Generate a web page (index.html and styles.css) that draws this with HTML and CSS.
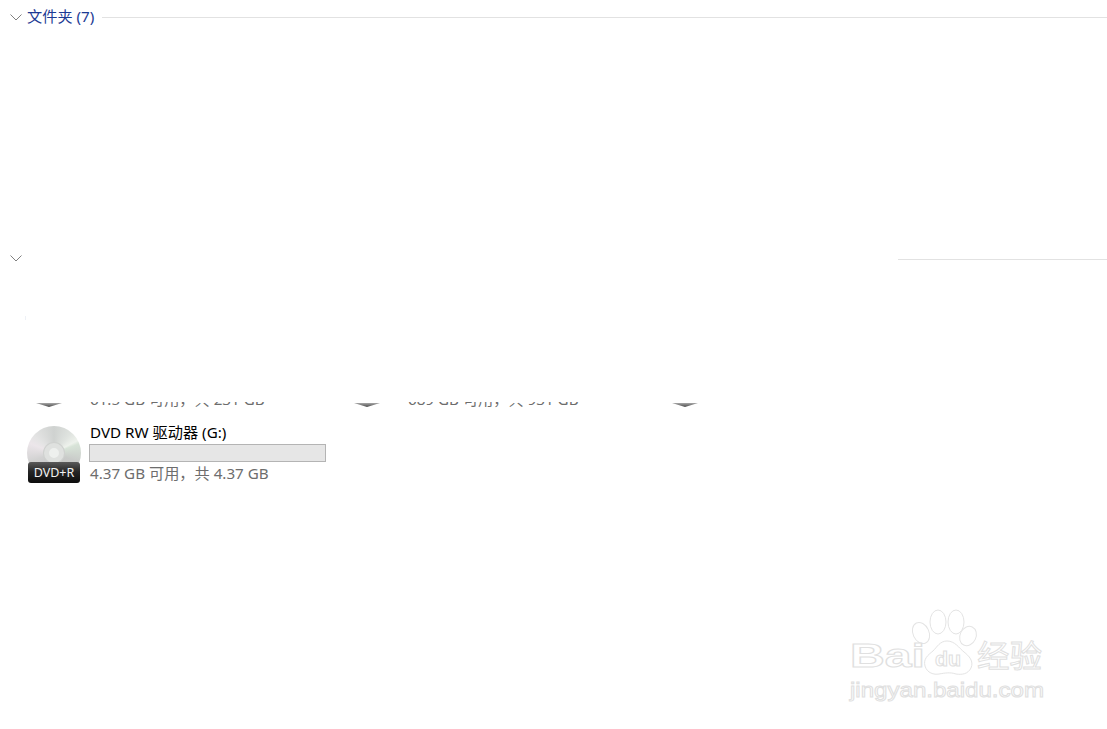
FILE: index.html
```html
<!DOCTYPE html>
<html lang="zh-CN">
<head>
    <meta charset="UTF-8">
    <meta name="viewport" content="width=device-width, initial-scale=1.0">
    <title>此电脑</title>
    <link rel="stylesheet" href="styles.css">
</head>
<body>
    <section class="group group-folders">
        <div class="group-head">
            <svg class="chevron" width="12" height="7" viewBox="0 0 12 7"><path d="M.5.5 6 6 11.500.5" /></svg>
            <span class="group-title">文件夹 (7)</span>
            <span class="group-line"></span>
        </div>
    </section>

    <section class="group group-drives">
        <div class="group-head">
            <svg class="chevron" width="12" height="7" viewBox="0 0 12 7"><path d="M.5.5 6 6 11.500.5" /></svg>
            <span class="group-blank"></span>
            <span class="group-line group-line-low"></span>
        </div>
        <div class="speck"></div>

        <div class="clipped-row">
            <div class="clipped-item">
                <span class="clipped-icon"></span>
                <span class="clipped-text">61.5 GB 可用，共 231 GB</span>
            </div>
            <div class="clipped-item">
                <span class="clipped-icon"></span>
                <span class="clipped-text">689 GB 可用，共 931 GB</span>
            </div>
            <div class="clipped-item">
                <span class="clipped-icon"></span>
            </div>
        </div>

        <div class="drive">
            <div class="disc">
                <div class="disc-hub"></div>
                <div class="disc-label">DVD+R</div>
            </div>
            <div class="drive-info">
                <div class="drive-name">DVD RW 驱动器 (G:)</div>
                <div class="drive-bar"></div>
                <div class="drive-free">4.37 GB 可用，共 4.37 GB</div>
            </div>
        </div>
    </section>

    <svg class="watermark" width="230" height="110" viewBox="0 0 230 110">
        <g class="wm-shape">
            <ellipse cx="91" cy="33" rx="8" ry="11" transform="rotate(-25 91 33)" />
            <ellipse cx="108" cy="22" rx="8" ry="12" />
            <ellipse cx="126" cy="22" rx="8" ry="12" />
            <ellipse cx="138" cy="36" rx="8" ry="10" transform="rotate(25 138 36)" />
            <path d="M117 41c-7 0-10 6-14 10-5 4-10 8-8 15 2 7 9 9 14 8 6-1 11-2 17 0 6 1 12 0 15-6 3-7-2-12-7-16-5-4-9-11-17-11z" />
        </g>
        <text class="wm-text wm-bai" x="20" y="67" textLength="75" lengthAdjust="spacingAndGlyphs">Bai</text>
        <text class="wm-text wm-du" x="105" y="66" textLength="26" lengthAdjust="spacingAndGlyphs">du</text>
        <text class="wm-text wm-cn" x="147" y="67" textLength="65" lengthAdjust="spacingAndGlyphs">经验</text>
        <text class="wm-text wm-url" x="20" y="97" textLength="194" lengthAdjust="spacingAndGlyphs">jingyan.baidu.com</text>
    </svg>
</body>
</html>
```

FILE: styles.css
```css
html, body {
    height: 100%;
}

body {
    margin: 0;
    position: relative;
    overflow: hidden;
    background: #fff;
    font-family: "Noto Sans", "Noto Sans CJK SC", sans-serif;
    font-size: 15.2px;
}

.group-folders {
    height: 241px;
}

.group-head {
    display: flex;
    align-items: center;
    height: 34px;
    padding-left: 10px;
}

.chevron {
    flex: none;
    fill: none;
    stroke: #808080;
    stroke-width: 1;
}

.group-title {
    margin-left: 5px;
    margin-top: -3px;
    color: #1c3a94;
    line-height: 20px;
    white-space: nowrap;
}

.group-blank {
    width: 868px;
}

.group-line {
    flex: 1;
    height: 1px;
    margin-left: 8px;
    background: #e2e2e2;
}

.group-line-low {
    margin-top: 2px;
}

.speck {
    width: 1px;
    height: 4px;
    margin: 41px 0 0 25px;
    background: #eef1f6;
}

.clipped-row {
    display: grid;
    grid-template-columns: repeat(3, 318px);
    height: 7px;
    margin-top: 82px;
    padding-left: 36px;
    overflow: hidden;
}

.clipped-item {
    display: flex;
    height: 7px;
    align-items: flex-end;
}

.clipped-icon {
    width: 26px;
    height: 4px;
    margin-bottom: 2px;
    background: linear-gradient(#a8a8a8, #4a4a4a);
    clip-path: polygon(0 0, 100% 0, 50% 100%);
}

.clipped-text {
    margin-left: 28px;
    color: #6d6d6d;
    line-height: 20px;
    white-space: nowrap;
}

.drive {
    display: flex;
    margin-top: 17px;
    padding-left: 27px;
}

.disc {
    position: relative;
    width: 54px;
    height: 54px;
    border-radius: 50%;
    background: conic-gradient(#cfd2d0 0deg, #dfe3df 40deg, #eef2ec 62deg, #d8e4d8 70deg, #c9cbc9 110deg, #c4c4c4 180deg, #d2d2d2 250deg, #ece6ea 292deg, #e4e4e4 310deg, #cfd2d0 360deg);
}

.disc-hub {
    position: absolute;
    left: 17px;
    top: 17px;
    width: 20px;
    height: 20px;
    box-sizing: border-box;
    border: 5px solid #dfe1df;
    border-radius: 50%;
    background: #eef0ee;
    box-shadow: 0 0 0 1px #cfd1cf;
}

.disc-label {
    position: absolute;
    left: 1px;
    top: 36px;
    width: 52px;
    height: 21px;
    border-radius: 3px;
    background: linear-gradient(#5a5a5a, #262626 45%, #0c0c0c);
    color: #f2f2f2;
    font-family: "Noto Sans", sans-serif;
    font-size: 12.5px;
    line-height: 22px;
    text-align: center;
}

.drive-info {
    margin-left: 8px;
}

.drive-name {
    height: 18px;
    padding-left: 1px;
    color: #000;
    line-height: 12px;
    white-space: nowrap;
}

.drive-bar {
    box-sizing: border-box;
    width: 237px;
    height: 18px;
    border: 1px solid #b4b4b4;
    background: #e6e6e6;
}

.drive-free {
    padding-left: 1px;
    color: #6d6d6d;
    line-height: 22px;
    white-space: nowrap;
}

.watermark {
    position: absolute;
    right: 47px;
    bottom: 19px;
}

.wm-shape {
    fill: #fff;
    stroke: #e4e4e4;
    stroke-width: 1;
}

.wm-text {
    fill: #fff;
    stroke: #e0e0e0;
    stroke-width: 1;
    font-family: "Liberation Sans", sans-serif;
}

.wm-bai {
    font-size: 33px;
    font-weight: bold;
}

.wm-du {
    font-size: 20px;
    font-weight: bold;
}

.wm-cn {
    font-family: "Noto Sans CJK SC", sans-serif;
    font-size: 31px;
}

.wm-url {
    font-size: 21px;
}
```
